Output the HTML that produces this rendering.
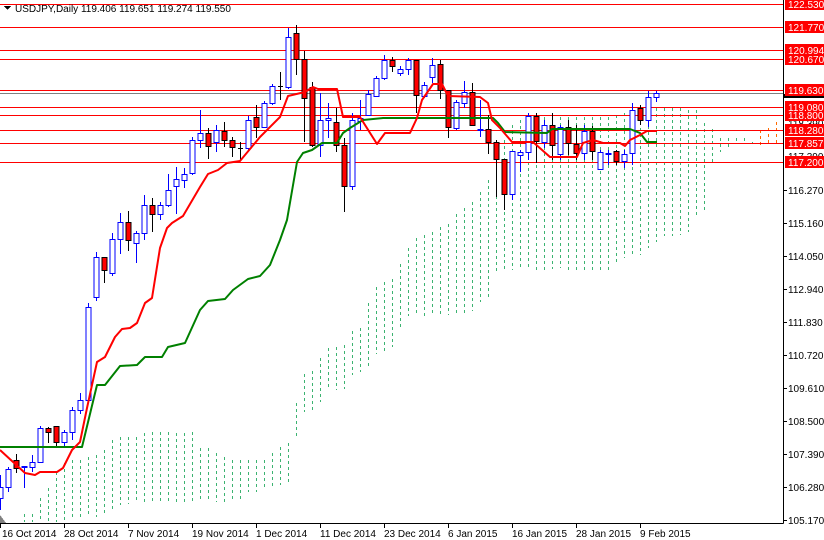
<!DOCTYPE html>
<html><head><meta charset="utf-8"><style>
html,body{margin:0;padding:0;background:#fff;}
svg{display:block;font-family:"Liberation Sans",sans-serif;font-size:10px;}
.b rect{fill:#fff;stroke:#0000ff;stroke-width:1}
.b path{stroke:#0000ff;stroke-width:1;fill:none}
.r rect{fill:#ff0000;stroke:#000;stroke-width:1}
.r path{stroke:#000;stroke-width:1;fill:none}
</style></head><body>
<svg width="824" height="540" viewBox="0 0 824 540" shape-rendering="crispEdges">
<rect width="824" height="540" fill="#fff"/>
<path stroke="#3cb371" stroke-width="1" stroke-dasharray="3 3" fill="none" d="
M24.5 514V522 M32.5 514V522 M40.5 498V522 M48.5 488V522 M56.5 472V522 M64.5 463V520 M72.5 460V520 M80.5 460V518 M88.5 457V517 M96.5 455V517 M104.5 450V515 M112.5 440V510 M120.5 437V505 M128.5 437V504 M136.5 437V503 M144.5 433V503 M152.5 432V502 M160.5 432V502 M168.5 432V502 M176.5 433V502 M184.5 433V502 M192.5 432V502 M200.5 448V502 M208.5 448V502 M216.5 453V502 M224.5 457V502 M232.5 460V502 M240.5 460V502 M248.5 460V492 M256.5 460V492 M264.5 460V490 M272.5 453V488 M280.5 447V485 M288.5 443V482
M296.5 403V436 M304.5 374V412 M312.5 371V410 M320.5 358V402 M328.5 348V390 M336.5 347V390 M344.5 345V389 M352.5 331V375 M360.5 328V372 M368.5 303V366 M376.5 287V354 M384.5 282V351 M392.5 279V347 M400.5 264V327 M408.5 248V316 M416.5 238V313 M424.5 235V316 M432.5 232V313 M440.5 227V314 M448.5 224V315 M456.5 214V313 M464.5 208V313 M472.5 202V311 M480.5 192V302 M488.5 180V297 M496.5 160V272 M504.5 140V272 M512.5 125V270 M520.5 120V270 M528.5 120V270 M536.5 117V270 M544.5 117V270 M552.5 117V269 M560.5 117V268 M568.5 117V270 M576.5 117V270 M584.5 117V272 M592.5 117V272 M600.5 117V272 M608.5 117V272 M616.5 115V262 M624.5 113V258 M632.5 113V257 M640.5 110V255 M648.5 108V248 M656.5 108V242 M664.5 108V236 M672.5 108V236 M680.5 108V235 M688.5 110V232 M696.5 110V217 M704.5 123V213 M712.5 129V162 M720.5 138V152 M728.5 138V150 M736.5 138V142 M744.5 138V142 M752.5 142V144"/>
<path stroke="#ff6a00" stroke-width="1" stroke-dasharray="3 3" fill="none" d="M760.5 130V145 M768.5 128V143 M776.5 122V143"/>
<g stroke="#ff0000" stroke-width="1">
<path d="M0 4.5H783 M0 27.5H783 M0 50.5H783 M0 59.5H783 M0 90.5H783 M0 107.5H783 M0 115.5H783 M0 130.5H783 M0 143.5H783 M0 162.5H783"/>
</g>
<path d="M0 93.5H783" stroke="#808080" stroke-width="1"/>
<g class="b">
<path d="M0.5 475V510 M8.5 467V492 M24.5 466V488 M32.5 455V472 M40.5 426V463 M64.5 430V446 M72.5 407V440 M80.5 393V414 M88.5 303V400 M96.5 252V301 M112.5 233V276 M120.5 213V254 M136.5 231V263 M144.5 195V240 M160.5 202V220 M168.5 174V207 M176.5 167V214 M184.5 168V188 M192.5 137V175 M200.5 110V148 M216.5 125V152 M248.5 116V150 M264.5 101V128 M272.5 84V105 M288.5 28V89 M320.5 93V157 M328.5 103V138 M352.5 113V190 M360.5 100V130 M368.5 90V115 M376.5 76V96 M384.5 55V80 M400.5 66V76 M408.5 58V75 M424.5 82V98 M432.5 58V83 M456.5 100V130 M464.5 81V108 M480.5 100V137 M512.5 151V200 M520.5 150V172 M528.5 113V160 M544.5 120V148 M560.5 125V160 M584.5 125V160 M600.5 150V170 M608.5 150V165 M624.5 150V168 M632.5 103V165 M648.5 91V127 M656.5 91V102"/>
<rect x="-2" y="487.5" width="5" height="11"/><rect x="6" y="469.5" width="5" height="18"/><rect x="22" y="466.5" width="5" height="1"/><rect x="30" y="462.5" width="5" height="5"/><rect x="38" y="428.5" width="5" height="34"/><rect x="62" y="432.5" width="5" height="10"/><rect x="70" y="410.5" width="5" height="22"/><rect x="78" y="400.5" width="5" height="10"/><rect x="86" y="307.5" width="5" height="93"/><rect x="94" y="257.5" width="5" height="40"/><rect x="110" y="239.5" width="5" height="34"/><rect x="118" y="222.5" width="5" height="17"/><rect x="134" y="233.5" width="5" height="10"/><rect x="142" y="205.5" width="5" height="28"/><rect x="158" y="205.5" width="5" height="9"/><rect x="166" y="190.5" width="5" height="15"/><rect x="174" y="179.5" width="5" height="7"/><rect x="182" y="174.5" width="5" height="6"/><rect x="190" y="140.5" width="5" height="33"/><rect x="198" y="133.5" width="5" height="7"/><rect x="214" y="130.5" width="5" height="12"/><rect x="246" y="120.5" width="5" height="28"/><rect x="262" y="103.5" width="5" height="24"/><rect x="270" y="86.5" width="5" height="17"/><rect x="286" y="37.5" width="5" height="50"/><rect x="318" y="120.5" width="5" height="25"/><rect x="326" y="118.5" width="5" height="2"/><rect x="350" y="120.5" width="5" height="66"/><rect x="358" y="118.5" width="5" height="3"/><rect x="366" y="94.5" width="5" height="21"/><rect x="374" y="78.5" width="5" height="18"/><rect x="382" y="60.5" width="5" height="18"/><rect x="398" y="69.5" width="5" height="4"/><rect x="406" y="60.5" width="5" height="9"/><rect x="422" y="85.5" width="5" height="11"/><rect x="430" y="65.5" width="5" height="12"/><rect x="454" y="102.5" width="5" height="26"/><rect x="462" y="92.5" width="5" height="11"/><rect x="478" y="129.5" width="5" height="1"/><rect x="510" y="151.5" width="5" height="43"/><rect x="518" y="152.5" width="5" height="3"/><rect x="526" y="116.5" width="5" height="36"/><rect x="542" y="125.5" width="5" height="17"/><rect x="558" y="127.5" width="5" height="27"/><rect x="582" y="131.5" width="5" height="22"/><rect x="598" y="152.5" width="5" height="17"/><rect x="606" y="153.5" width="5" height="1"/><rect x="622" y="154.5" width="5" height="7"/><rect x="630" y="110.5" width="5" height="43"/><rect x="646" y="97.5" width="5" height="23"/><rect x="654" y="93.5" width="5" height="4"/>
</g>
<g class="r">
<path d="M16.5 454V473 M48.5 427V443 M56.5 426V448 M104.5 257V283 M128.5 211V251 M152.5 198V232 M208.5 128V159 M224.5 122V147 M232.5 137V157 M240.5 142V161 M256.5 105V138 M280.5 72V100 M296.5 25V75 M304.5 51V142 M312.5 82V147 M336.5 108V152 M344.5 138V212 M392.5 57V72 M416.5 60V113 M440.5 60V99 M448.5 90V138 M472.5 83V126 M488.5 115V154 M496.5 140V197 M504.5 159V210 M536.5 113V163 M552.5 113V160 M568.5 120V155 M576.5 125V160 M592.5 126V160 M616.5 150V165 M640.5 105V125 M238 148.5H243 M278 86.5H283"/>
<rect x="14" y="460.5" width="5" height="8"/><rect x="46" y="428.5" width="5" height="4"/><rect x="54" y="426.5" width="5" height="16"/><rect x="102" y="257.5" width="5" height="13"/><rect x="126" y="222.5" width="5" height="18"/><rect x="150" y="205.5" width="5" height="9"/><rect x="206" y="133.5" width="5" height="13"/><rect x="222" y="131.5" width="5" height="9"/><rect x="230" y="140.5" width="5" height="7"/><rect x="254" y="117.5" width="5" height="10"/><rect x="294" y="33.5" width="5" height="26"/><rect x="302" y="59.5" width="5" height="39"/><rect x="310" y="87.5" width="5" height="58"/><rect x="334" y="122.5" width="5" height="23"/><rect x="342" y="145.5" width="5" height="41"/><rect x="390" y="60.5" width="5" height="6"/><rect x="414" y="60.5" width="5" height="35"/><rect x="438" y="64.5" width="5" height="26"/><rect x="446" y="90.5" width="5" height="37"/><rect x="470" y="92.5" width="5" height="33"/><rect x="486" y="129.5" width="5" height="13"/><rect x="494" y="142.5" width="5" height="17"/><rect x="502" y="159.5" width="5" height="35"/><rect x="534" y="116.5" width="5" height="25"/><rect x="550" y="125.5" width="5" height="20"/><rect x="566" y="127.5" width="5" height="16"/><rect x="574" y="144.5" width="5" height="9"/><rect x="590" y="131.5" width="5" height="20"/><rect x="614" y="151.5" width="5" height="10"/><rect x="638" y="108.5" width="5" height="12"/>
</g>
<g fill="none" stroke-width="2" shape-rendering="auto" stroke-linejoin="round">
<polyline stroke="#008000" points="0,447 82,447 97,385 105,385 120,366 137,365 145,357 162,357 168,347 185,343 200,310 208,301 225,299 233,290 248,279 260,276 270,265 280,240 287,220 297,162 303,153 312,150 322,143 337,143 343,133 350,128 363,120 383,118 493,118 498,123 505,132 547,133 552,129 630,129 640,133 647,142 657,142"/>
<polyline stroke="#ff0000" points="0,450 25,473 35,475 40,472 57,472 63,468 72,450 80,442 87,408 97,362 105,357 115,337 122,329 130,328 137,323 145,303 152,298 160,248 167,228 172,223 183,216 200,187 208,174 218,170 227,163 240,161 260,137 280,117 288,96 305,92 313,87 318,89 337,89 343,117 360,117 377,144 385,133 410,133 417,118 422,100 433,84 442,84 448,96 480,97 488,103 492,120 500,128 512,142 533,142 550,157 577,157 583,143 593,140 603,143 620,143 625,146 630,140 640,135 647,131 657,131"/>
</g>
<path d="M783.5 0V523.5 M0 523.5H783.5" stroke="#000" stroke-width="1"/>
<path d="M0 515 L0 523 L6 523Z" fill="#808080"/>
<path stroke="#000" d="M784 190.5H787 M784 223.5H787 M784 256.5H787 M784 289.5H787 M784 322.5H787 M784 355.5H787 M784 388.5H787 M784 421.5H787 M784 454.5H787 M784 487.5H787 M784 520.5H787 M0.5 524V528 M64.5 524V528 M128.5 524V528 M192.5 524V528 M256.5 524V528 M320.5 524V528 M384.5 524V528 M448.5 524V528 M512.5 524V528 M576.5 524V528 M640.5 524V528"/>
<g fill="#000">
<text x="788" y="194">116.270</text><text x="788" y="227">115.160</text><text x="788" y="260">114.050</text><text x="788" y="293">112.940</text><text x="788" y="326">111.830</text><text x="788" y="359">110.720</text><text x="788" y="392">109.610</text><text x="788" y="425">108.500</text><text x="788" y="458">107.390</text><text x="788" y="491">106.280</text><text x="788" y="524">105.170</text>
<text x="788" y="127">118.390</text><text x="788" y="160">117.390</text>
<text x="2" y="537">16 Oct 2014</text><text x="64" y="537">28 Oct 2014</text><text x="128" y="537">7 Nov 2014</text><text x="192" y="537">19 Nov 2014</text><text x="256" y="537">1 Dec 2014</text><text x="320" y="537">11 Dec 2014</text><text x="384" y="537">23 Dec 2014</text><text x="448" y="537">6 Jan 2015</text><text x="512" y="537">16 Jan 2015</text><text x="576" y="537">28 Jan 2015</text><text x="640" y="537">9 Feb 2015</text>
</g>
<rect x="784" y="94" width="40" height="4" fill="#000"/>
<g fill="#ff0000">
<rect x="785" y="-2" width="39" height="12"/><rect x="785" y="21" width="39" height="12"/><rect x="785" y="44" width="39" height="12"/><rect x="785" y="53" width="39" height="12"/><rect x="785" y="84" width="39" height="12"/><rect x="785" y="101" width="39" height="12"/><rect x="785" y="109" width="39" height="12"/><rect x="785" y="124" width="39" height="12"/><rect x="785" y="137" width="39" height="12"/><rect x="785" y="156" width="39" height="12"/>
</g>
<g fill="#fff">
<text x="788" y="8">122.530</text><text x="788" y="31">121.770</text><text x="788" y="54">120.994</text><text x="788" y="63">120.670</text><text x="788" y="94">119.630</text><text x="788" y="111">119.080</text><text x="788" y="119">118.800</text><text x="788" y="134">118.280</text><text x="788" y="147">117.857</text><text x="788" y="166">117.200</text>
</g>
<path d="M4 6H11L7.5 10Z" fill="#000"/>
<text x="15" y="12" fill="#000">USDJPY,Daily  119.406 119.651 119.274 119.550</text>
</svg>
</body></html>
